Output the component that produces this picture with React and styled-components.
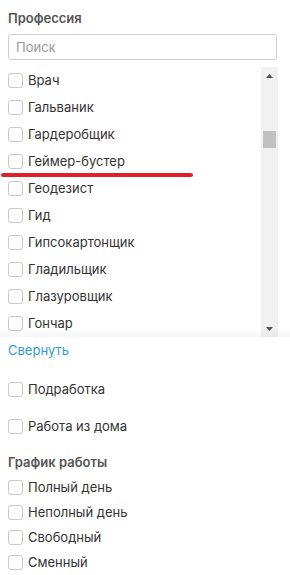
import React from "react";
import styled, { createGlobalStyle } from "styled-components";

const Global = createGlobalStyle`
  html, body { margin: 0; padding: 0; background: #fff; }
  body { font-family: Inter, "Noto Sans", sans-serif; color: #333; }
  * { box-sizing: border-box; }
`;

const Page = styled.div`
  position: relative;
  width: 290px;
  padding: 9px 12px 0 8px;
`;

const Title = styled.div`
  font-size: 13px;
  font-weight: 600;
  color: #555;
  line-height: 18px;
  height: 18px;
  margin: ${(p) => p.$m || "0"};
`;

const Search = styled.input`
  display: block;
  width: 269px;
  height: 26px;
  margin-top: 7px;
  border: 1px solid #cfcfcf;
  border-radius: 3px;
  padding: 0 7px;
  font: 13px Inter, sans-serif;
  color: #333;
  outline: none;
  &::placeholder { color: #9a9a9a; }
`;

const ListBox = styled.div`
  position: relative;
  display: flex;
  width: 270px;
  height: 270px;
  margin-top: 7px;
`;

const Viewport = styled.div`
  flex: 1;
  overflow: hidden;
`;

const Fade = styled.div`
  position: absolute;
  left: -8px;
  right: -12px;
  bottom: 0;
  height: 10px;
  background: linear-gradient(to bottom, rgba(0,0,0,0), rgba(0,0,0,0.035));
  pointer-events: none;
`;

const Row = styled.label`
  display: flex;
  align-items: center;
  gap: 5px;
  height: ${(p) => p.$h || 27}px;
  font-size: 13px;
  color: #333;
  line-height: 1;
`;

const Box = styled.span`
  width: 15px;
  height: 15px;
  border: 1px solid #c9c9c9;
  border-radius: 3px;
  background: #fff;
  flex: none;
`;

const Track = styled.div`
  width: 17px;
  flex: none;
  background: #f1f1f1;
  display: flex;
  flex-direction: column;
  align-items: center;
`;

const Arrow = styled.div`
  height: 17px;
  width: 17px;
  display: flex;
  align-items: center;
  justify-content: center;
`;

const Rail = styled.div`
  flex: 1;
  width: 100%;
  padding: 47px 2px 0;
`;

const Thumb = styled.div`
  width: 13px;
  height: 17px;
  background: #c1c1c1;
`;

const Link = styled.div`
  font-size: 13px;
  color: #2e9bd6;
  height: 26px;
  display: flex;
  align-items: center;
`;

const Spacer = styled.div`
  height: ${(p) => p.$h}px;
`;

const Mark = styled.div`
  position: absolute;
  left: 1px;
  top: 173px;
  width: 192px;
  height: 4px;
  border-radius: 2px;
  background: #e01f2b;
`;

const Check = ({ children, h }) => (
  <Row $h={h}>
    <Box />
    {children}
  </Row>
);

const professions = [
  "Врач",
  "Гальваник",
  "Гардеробщик",
  "Геймер-бустер",
  "Геодезист",
  "Гид",
  "Гипсокартонщик",
  "Гладильщик",
  "Глазуровщик",
  "Гончар",
];

const schedule = ["Полный день", "Неполный день", "Свободный", "Сменный"];

export default function App() {
  return (
    <>
      <Global />
      <Page>
        <Title>Профессия</Title>
        <Search placeholder="Поиск" />
        <ListBox>
          <Viewport>
            {professions.map((p) => (
              <Check key={p}>{p}</Check>
            ))}
          </Viewport>
          <Track>
            <Arrow>
              <svg width="7" height="4" viewBox="0 0 7 4"><path d="M0 4L3.5 0L7 4Z" fill="#505050" /></svg>
            </Arrow>
            <Rail>
              <Thumb />
            </Rail>
            <Arrow>
              <svg width="7" height="4" viewBox="0 0 7 4"><path d="M0 0L3.5 4L7 0Z" fill="#505050" /></svg>
            </Arrow>
          </Track>
          <Fade />
        </ListBox>
        <Link>Свернуть</Link>
        <Spacer $h={13} />
        <Check h={26}>Подработка</Check>
        <Spacer $h={11} />
        <Check h={26}>Работа из дома</Check>
        <Title $m="14px 0 4px">График работы</Title>
        {schedule.map((s) => (
          <Check key={s} h={25}>{s}</Check>
        ))}
        <Mark />
      </Page>
    </>
  );
}
